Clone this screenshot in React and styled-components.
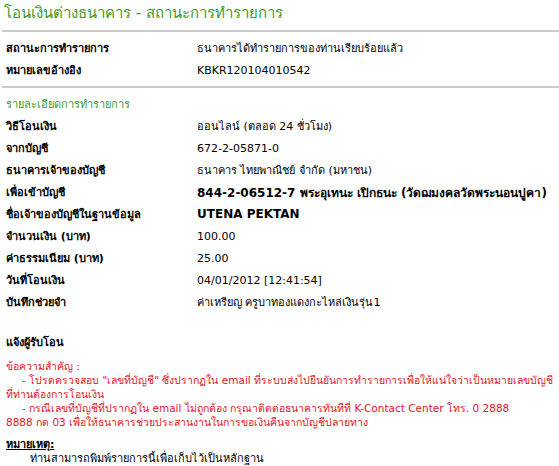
import styled, { createGlobalStyle } from "styled-components";

const GlobalStyle = createGlobalStyle`
  body {
    margin: 0;
    background: #ffffff;
    font-family: "DejaVu Sans", Verdana, sans-serif;
    font-size: 11px;
    color: #000000;
  }
`;

const Page = styled.div`
  padding: 2px 0 0 2px;
  width: 557px;
`;

const Title = styled.h1`
  margin: 0;
  padding: 0 0 0 2px;
  height: 28px;
  line-height: 22px;
  font-size: 15px;
  font-weight: normal;
  color: #3d9b1f;
  white-space: nowrap;
`;

const Divider = styled.hr`
  margin: 0;
  border: none;
  height: 2px;
  background: #cccccc;
`;

const Table = styled.div`
  padding: 5px 0 5px 4px;
  display: grid;
  grid-template-columns: 191px 1fr;
  grid-auto-rows: 22px;
  align-items: center;
  white-space: nowrap;
`;

const Label = styled.div`
  font-weight: bold;
`;

const Value = styled.div`
  font-weight: ${(p) => (p.$strong ? "bold" : "normal")};
  font-size: ${(p) => (p.$strong ? "12px" : "11px")};
`;

const SectionTitle = styled.div`
  grid-column: 1 / -1;
  color: #3d9b1f;
`;

const Heading = styled.div`
  padding: 14px 0 0 4px;
  font-weight: bold;
  height: 22px;
  line-height: 22px;
`;

const Notice = styled.div`
  padding: 5px 0 0 4px;
  color: #e3151d;
  font-size: 10.5px;
  line-height: 14px;
  white-space: nowrap;
`;

const Indent = styled.div`
  padding-left: 16px;
`;

const Remark = styled.div`
  padding: 9px 0 0 4px;
  line-height: 14px;
`;

const RemarkTitle = styled.div`
  font-weight: bold;
  text-decoration: underline;
`;

const RemarkText = styled.div`
  padding-left: 24px;
`;

const summary = [
  ["สถานะการทำรายการ", "ธนาคารได้ทำรายการของท่านเรียบร้อยแล้ว"],
  ["หมายเลขอ้างอิง", "KBKR120104010542"],
];

const details = [
  ["วิธีโอนเงิน", "ออนไลน์ (ตลอด 24 ชั่วโมง)"],
  ["จากบัญชี", "672-2-05871-0"],
  ["ธนาคารเจ้าของบัญชี", "ธนาคาร ไทยพาณิชย์ จำกัด (มหาชน)"],
  ["เพื่อเข้าบัญชี", "844-2-06512-7 พระอุเทนะ เปิกธนะ (วัดฌมงคลวัดพระนอนปูคา)", true],
  ["ชื่อเจ้าของบัญชีในฐานข้อมูล", "UTENA PEKTAN", true],
  ["จำนวนเงิน (บาท)", "100.00"],
  ["ค่าธรรมเนียม (บาท)", "25.00"],
  ["วันที่โอนเงิน", "04/01/2012 [12:41:54]"],
  ["บันทึกช่วยจำ", "ค่าเหรียญ ครูบาทองแดงกะไหล่เงินรุ่น1"],
];

export default function App() {
  return (
    <Page>
      <GlobalStyle />
      <Title>โอนเงินต่างธนาคาร - สถานะการทำรายการ</Title>
      <Divider />
      <Table>
        {summary.map(([label, value]) => (
          <>
            <Label key={label}>{label}</Label>
            <Value>{value}</Value>
          </>
        ))}
      </Table>
      <Divider />
      <Table>
        <SectionTitle>รายละเอียดการทำรายการ</SectionTitle>
        {details.map(([label, value, strong]) => (
          <>
            <Label key={label}>{label}</Label>
            <Value $strong={strong}>{value}</Value>
          </>
        ))}
      </Table>
      <Heading>แจ้งผู้รับโอน</Heading>
      <Notice>
        <div>ข้อความสำคัญ :</div>
        <Indent>
          - โปรดตรวจสอบ "เลขที่บัญชี" ซึ่งปรากฏใน email ที่ระบบส่งไปยืนยันการทำรายการเพื่อให้แน่ใจว่าเป็นหมายเลขบัญชี
        </Indent>
        <div>ที่ท่านต้องการโอนเงิน</div>
        <Indent>
          - กรณีเลขที่บัญชีที่ปรากฏใน email ไม่ถูกต้อง กรุณาติดต่อธนาคารทันทีที่ K-Contact Center โทร. 0 2888
        </Indent>
        <div>8888 กด 03 เพื่อให้ธนาคารช่วยประสานงานในการขอเงินคืนจากบัญชีปลายทาง</div>
      </Notice>
      <Remark>
        <RemarkTitle>หมายเหตุ:</RemarkTitle>
        <RemarkText>ท่านสามารถพิมพ์รายการนี้เพื่อเก็บไว้เป็นหลักฐาน</RemarkText>
      </Remark>
    </Page>
  );
}
